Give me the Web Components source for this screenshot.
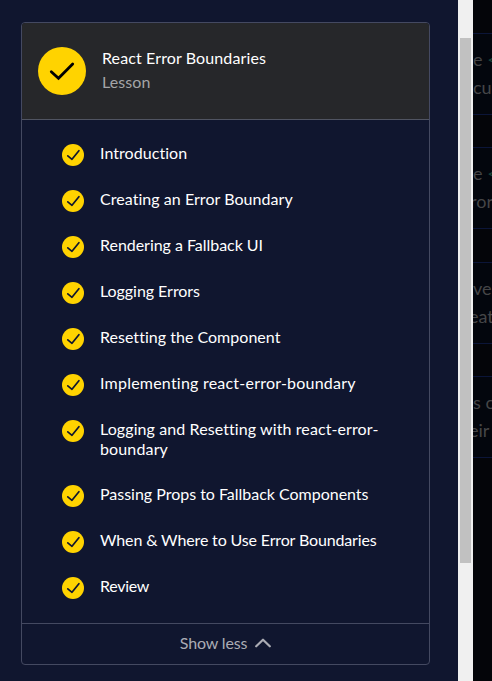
<!DOCTYPE html>
<html lang="en"><head><meta charset="utf-8"><title>React Error Boundaries</title>
<style>
html,body{margin:0;height:681px;overflow:hidden;background:#10162f}
body{font:16px/20px Lato,"Open Sans",sans-serif;color:#fff}
</style></head><body>
<course-page></course-page>
<script>
const define=(name,html,init)=>customElements.define(name,class extends HTMLElement{
  connectedCallback(){
    if(this.shadowRoot)return;
    const t=document.createElement('template');t.innerHTML=html;
    this.attachShadow({mode:'open'}).append(t.content.cloneNode(true));
    if(init)init(this);
  }
});
// Text line whose tracking is adjusted to span a given width.
define('tracked-text','<style>:host{display:block;white-space:nowrap;width:max-content}</style><slot></slot>',el=>{
  const w=+el.getAttribute('width'),n=el.textContent.length;
  el.style.letterSpacing=((w-el.getBoundingClientRect().width)/n)+'px';
});
define('check-badge',`<style>:host{display:block;flex:none;width:22px;height:22px}:host([large]){width:48px;height:48px}svg{display:block;width:100%;height:100%}.l{display:none}:host([large]) .l{display:block}:host([large]) .s{display:none}</style>
<svg class="s" viewBox="0 0 22 22"><circle cx="11" cy="11" r="11" fill="#ffd300"/><path d="M5.8 11.8L10 15.3L16.9 6.7" fill="none" stroke="#10162f" stroke-width="1.7" stroke-linecap="round" stroke-linejoin="round"/></svg>
<svg class="l" viewBox="0 0 48 48"><circle cx="24" cy="24" r="24" fill="#ffd300"/><path d="M13.3 24.7L20.5 31.3L34.7 17" fill="none" stroke="#000" stroke-width="2.8" stroke-linecap="round"/></svg>`);
define('lesson-item',`<style>:host{display:flex;gap:16px;margin-bottom:24px;min-height:22px}.t{margin-top:-1px}</style><check-badge></check-badge><div class="t"><slot></slot></div>`);
define('lesson-header',`<style>:host{display:flex;align-items:center;gap:16px;height:96px;padding:0 16px;background:#26272a;border-bottom:1px solid #505462;border-radius:3px 3px 0 0}.t{line-height:24px;padding-bottom:2px}.sub{color:#a4a5a7}</style><check-badge large></check-badge><div class="t"><slot></slot><div class="sub"><slot name="sub"></slot></div></div>`);
define('show-toggle',`<style>:host{display:flex;align-items:center;justify-content:center;gap:8px;height:40px;border-top:1px solid #444961;color:#abacb4}svg{display:block;margin-bottom:2px}::slotted(*){padding-bottom:2px}</style><slot></slot><svg width="16" height="10" viewBox="0 0 16 10"><path d="M1.2 8.3L8 1.7L14.8 8.3" fill="none" stroke="currentColor" stroke-width="2.2" stroke-linecap="round" stroke-linejoin="round"/></svg>`);
define('lesson-card',`<style>:host{display:block;box-sizing:border-box;width:409px;height:643px;border:1px solid #444961;border-radius:4px}.list{box-sizing:border-box;height:503px;padding:24px 40px 0}</style><slot name="header"></slot><div class="list"><slot></slot></div><slot name="footer"></slot>`);
define('scroll-track',`<style>:host{display:block;box-sizing:border-box;height:681px;padding:38px 2px 0;background:#f0f0f0}i{display:block;height:525px;background:#c1c1c1}</style><i></i>`);
define('dim-row',`<style>:host{display:block;box-sizing:border-box;height:82px;margin-bottom:32.4px;padding-top:11px;border:solid #0b1538;border-width:1px 0;background:#03060d;font:18px/28px Lato,sans-serif;color:#454547;white-space:nowrap;overflow:hidden}</style><slot></slot>`);
define('course-page',`<style>
:host{display:grid;grid-template-columns:458px 15px 19px;width:492px;height:681px;overflow:hidden}
.side{padding:22px 0 0 21px}.back{background:#040509;padding-top:33px;overflow:hidden}.c{color:#174439}
.back div{height:28px}.back .in{margin-left:-4px}
</style>
<div class="side"><lesson-card>
<lesson-header slot="header"><tracked-text width="164">React Error Boundaries</tracked-text><tracked-text slot="sub" width="48.5">Lesson</tracked-text></lesson-header>
<lesson-item><tracked-text width="87.5">Introduction</tracked-text></lesson-item>
<lesson-item><tracked-text width="193">Creating an Error Boundary</tracked-text></lesson-item>
<lesson-item><tracked-text width="163">Rendering a Fallback UI</tracked-text></lesson-item>
<lesson-item><tracked-text width="100">Logging Errors</tracked-text></lesson-item>
<lesson-item><tracked-text width="180">Resetting the Component</tracked-text></lesson-item>
<lesson-item><tracked-text width="256">Implementing react-error-boundary</tracked-text></lesson-item>
<lesson-item><tracked-text width="278">Logging and Resetting with react-error-</tracked-text><tracked-text width="68">boundary</tracked-text></lesson-item>
<lesson-item style="margin-top:26px"><tracked-text width="268.5">Passing Props to Fallback Components</tracked-text></lesson-item>
<lesson-item><tracked-text width="276.5">When &amp; Where to Use Error Boundaries</tracked-text></lesson-item>
<lesson-item><tracked-text width="49">Review</tracked-text></lesson-item>
<show-toggle slot="footer"><tracked-text width="67.5">Show less</tracked-text></show-toggle>
</lesson-card></div>
<scroll-track></scroll-track>
<div class="back">
<dim-row><div>e <span class="c">&lt;</span></div><div>cu</div></dim-row>
<dim-row><div>e <span class="c">&lt;</span></div><div style="margin-left:-3px">ror</div></dim-row>
<dim-row><div>ve</div><div class="in">eat</div></dim-row>
<dim-row><div>s c</div><div class="in">eir</div></dim-row>
</div>`);
</script></body></html>
